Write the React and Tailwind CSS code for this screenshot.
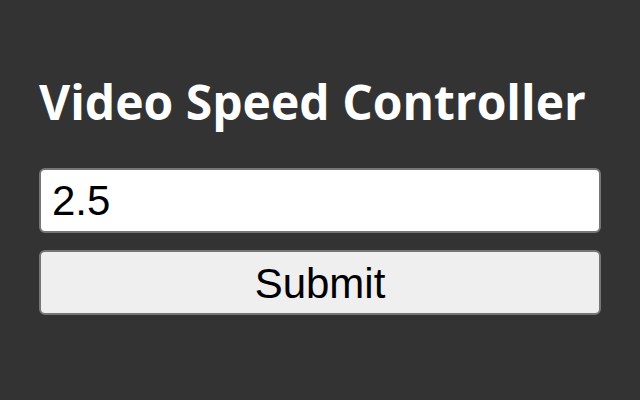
export default function App() {
  return (
    <div className="min-h-[400px] w-[640px] bg-[#333333] pl-[39px] pt-[72px]">
      <h1 className="font-['Open_Sans',sans-serif] text-[48px] font-bold leading-[60px] text-white">
        Video Speed Controller
      </h1>
      <div className="mt-[36px] flex flex-col gap-[17px]">
        <input
          type="text"
          defaultValue="2.5"
          className="h-[65px] w-[562px] rounded-[6px] border-2 border-[#767676] bg-white px-[11px] font-['Liberation_Sans',Arial,sans-serif] text-[42px] text-black outline-none"
        />
        <button className="h-[65px] w-[562px] rounded-[6px] border-2 border-[#767676] bg-[#efefef] font-['Liberation_Sans',Arial,sans-serif] text-[42px] text-black">
          Submit
        </button>
      </div>
    </div>
  );
}
